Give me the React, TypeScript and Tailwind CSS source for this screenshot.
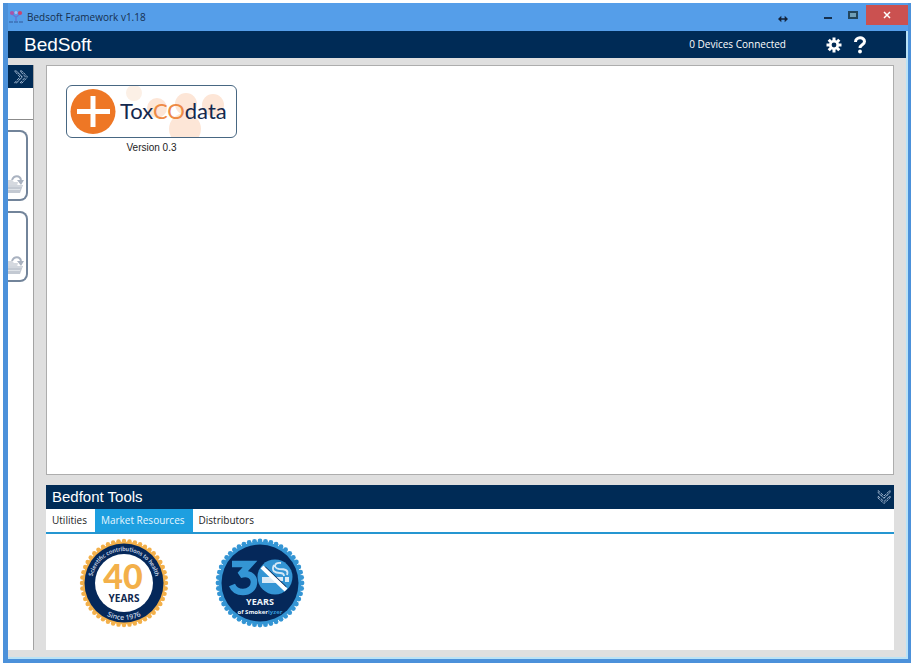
const recentApps = [
  { name: 'First application' },
  { name: 'Second application' },
];

const tabs = [
  { label: 'Utilities', active: false },
  { label: 'Market Resources', active: true },
  { label: 'Distributors', active: false },
];

const scallop = (radius: number, teeth: number) =>
  Array.from({ length: teeth }, (_, i) => {
    const angle = (i / teeth) * Math.PI * 2;
    return { x: 45 + Math.cos(angle) * radius, y: 45 + Math.sin(angle) * radius };
  });

const AppIcon = () => (
  <svg viewBox="0 0 14 14" className="h-[14px] w-[14px]" aria-hidden="true">
    <path d="M3 4l4 3 4-3M7 7v4" stroke="#6377d6" strokeWidth="1.4" fill="none" />
    <circle cx="3" cy="3" r="2.1" fill="#a955a8" />
    <circle cx="7" cy="2.4" r="1.5" fill="#a9bdf2" />
    <circle cx="11" cy="3" r="2.1" fill="#c9436f" />
    <path d="M0 12h4M5 12h4M10 12h4" stroke="#3c70b4" strokeWidth="1.4" />
  </svg>
);

const Chevrons = () => (
  <svg viewBox="0 0 16 16" className="h-4 w-4" fill="none" stroke="#a3b9d2" strokeWidth="1" aria-hidden="true">
    <path d="M1.5 2h2L9 8l-5.500 6h-2L7 8z" strokeDasharray="3 1" />
    <path d="M7 2h2l5.500 6L9 14H7l5.500-6z" strokeDasharray="3 1" />
    <path d="M5 3.500l4.500 4.500L5 12.500" strokeDasharray="1 1" />
  </svg>
);

const Gear = () => (
  <svg viewBox="0 0 16 16" className="h-4 w-4" aria-hidden="true">
    <g stroke="#fff" strokeWidth="3">
      <path d="M8 .5v15M.5 8h15M2.700 2.700l10.600 10.600M13.300 2.700L2.700 13.300" />
    </g>
    <circle cx="8" cy="8" r="5" fill="#fff" />
    <circle cx="8" cy="8" r="2.400" fill="#002b56" />
  </svg>
);

const Basket = () => (
  <svg viewBox="0 0 16 20" className="h-5 w-4" aria-hidden="true">
    <path d="M0 5h4l2 2h4l-1 4H0z" fill="#d5d9df" />
    <path d="M0 10h15l-3 8H0z" fill="#c3c9d2" />
    <path d="M0 11h14M0 14.500h12" stroke="#dfe3e8" strokeWidth="1" />
    <path d="M4 5c2-5 8-5 9 0" stroke="#a9b2c0" strokeWidth="2" fill="none" />
    <path d="M9 5h7l-3 5z" fill="#a9b2c0" />
  </svg>
);

const ToxcoLogo = () => (
  <svg viewBox="0 0 169 51" className="h-full w-full" role="img" aria-label="ToxCOdata">
    <g fill="#fde6d7">
      <circle cx="67" cy="7" r="8" fill="#fcf0e6" />
      <circle cx="90" cy="22" r="10" />
      <circle cx="119" cy="18" r="11" />
      <circle cx="118" cy="43" r="16" />
      <circle cx="146" cy="19" r="11" />
    </g>
    <circle cx="26" cy="25.500" r="22.500" fill="#ee7725" />
    <path d="M26 10v31M10 25.500h33" stroke="#fff" strokeWidth="5" />
    <text x="53" y="33" fontSize="22" fontFamily="Lato, sans-serif" fill="#14294e">
      Tox<tspan fill="#ee8a45">CO</tspan>data
    </text>
  </svg>
);

const FortyYears = () => (
  <svg viewBox="0 0 90 90" className="h-[90px] w-[90px]" role="img" aria-label="40 years, since 1976">
    <defs>
      <path id="forty-top" d="M13 45a32 32 0 0 1 64 0" />
      <path id="forty-bottom" d="M8 45a37 37 0 0 0 74 0" />
    </defs>
    {scallop(42, 48).map((p, i) => <circle key={i} cx={p.x} cy={p.y} r="2.200" fill="#f3b04a" />)}
    <circle cx="45" cy="45" r="41.500" fill="#f3b04a" />
    <circle cx="45" cy="45" r="39.500" fill="#05285a" />
    <circle cx="45" cy="45" r="29" fill="#fff" />
    <g textAnchor="middle">
      <text fontSize="6" fontFamily="Lato, sans-serif" fontWeight="700" fill="#c9d6e6">
        <textPath href="#forty-top" startOffset="50%">Scientific contributions to health</textPath>
      </text>
      <text fontSize="7" fontFamily="Open Sans, sans-serif" fontWeight="600" fill="#c9d6e6">
        <textPath href="#forty-bottom" startOffset="50%">Since 1976</textPath>
      </text>
      <text x="44" y="51" fontSize="34" fontWeight="900" fontFamily="Lato, sans-serif" fill="#f3b04a">40</text>
      <text x="45" y="64" fontSize="10" fontWeight="700" fontFamily="Open Sans, sans-serif" fill="#10294f">YEARS</text>
    </g>
  </svg>
);

const ThirtyYears = () => (
  <svg viewBox="0 0 90 90" className="h-[90px] w-[90px]" role="img" aria-label="30 years of Smokerlyzer">
    {scallop(42, 48).map((p, i) => <circle key={i} cx={p.x} cy={p.y} r="2.400" fill="#3495d4" />)}
    <circle cx="45" cy="45" r="41.500" fill="#3495d4" />
    <circle cx="45" cy="45" r="38.500" fill="#05285a" />
    <path d="M17 26h18L25 37c8-3 14 1 14 7 0 6-5 10-11 10-5 0-9-2-11-7" fill="none" stroke="#3495d4" strokeWidth="6.500" />
    <circle cx="60" cy="39" r="17.500" fill="#3495d4" />
    <path d="M47 39h8l7 6H47zM60 39h8v4h-4z" fill="#dceaf5" />
    <path d="M70 39h4v5h-4z" fill="#dceaf5" />
    <path d="M50 29l21 20" stroke="#05285a" strokeWidth="1.500" />
    <path d="M47 29l24 23" stroke="#fff" strokeWidth="4" />
    <path d="M66 25c-7-1-8 5-2 6 6 0 10 1 8 6M59 27c-3 6 1 8 6 8 3 0 4 1 4 3" stroke="#d5e8f6" strokeWidth="1.800" fill="none" />
    <g fontFamily="Open Sans, sans-serif" fontWeight="700" textAnchor="middle" fill="#eef5fb">
      <text x="45" y="67" fontSize="9">YEARS</text>
      <text x="45" y="76" fontSize="6">of Smoker<tspan fill="#3495d4">lyzer</tspan></text>
    </g>
  </svg>
);

const TitleBar = () => (
  <div className="flex h-7 shrink-0 items-start bg-[#559ee9] text-[#15304f]">
    <div className="flex h-7 flex-1 items-center gap-1 pl-[1px]">
      <AppIcon />
      <span className="font-['Open_Sans',sans-serif] text-[10px]">Bedsoft Framework v1.18</span>
    </div>
    <svg viewBox="0 0 12 8" className="mt-3 mr-9 h-2 w-[10px]" aria-hidden="true">
      <path d="M0 4l4-4v3h4V0l4 4-4 4V5H4v3z" fill="#13233a" />
    </svg>
    <button aria-label="Minimize" className="mt-2 mr-4 flex h-2 w-2 items-end">
      <span className="h-[2px] w-2 bg-[#15304f]" />
    </button>
    <button aria-label="Maximize" className="mt-2 mr-2 h-2 w-[10px] border-2 border-[#23465d] bg-[#6f9fb8]" />
    <button aria-label="Close" className="mt-[2px] flex h-5 w-[42px] items-center justify-center bg-[#cb5150]">
      <svg viewBox="0 0 8 8" className="h-2 w-2" aria-hidden="true">
        <path d="M1 1l6 6M7 1L1 7" stroke="#fff" strokeWidth="1.500" />
      </svg>
    </button>
  </div>
);

const Header = () => (
  <header className="flex h-[27px] shrink-0 items-center bg-[#002b56] pr-10 pl-4 text-white">
    <h1 className="flex-1 text-[19px] leading-6">BedSoft</h1>
    <span className="mr-10 font-['Open_Sans',sans-serif] text-[10px]">0 Devices Connected</span>
    <button aria-label="Settings" className="mr-3"><Gear /></button>
    <button aria-label="Help">
      <svg viewBox="0 0 12 18" className="h-[18px] w-3" aria-hidden="true">
        <path d="M1.500 6C1.500 .5 10.500 .5 10.500 5.500c0 3.500-4.500 3-4.500 6.500" fill="none" stroke="#fff" strokeWidth="3" />
        <circle cx="6" cy="15.500" r="1.900" fill="#fff" />
      </svg>
    </button>
  </header>
);

const Sidebar = () => (
  <aside className="w-[26px] shrink-0 overflow-hidden border-r border-[#a3a3a3] bg-white">
    <button aria-label="Expand" className="flex h-[23px] w-full items-center justify-center bg-[#002b56]">
      <Chevrons />
    </button>
    <div className="h-8 border-b border-[#8b8b8b]" />
    <div className="mt-[10px] flex flex-col gap-[10px]">
      {recentApps.map((app) => (
        <button
          key={app.name}
          aria-label={app.name}
          className="flex h-[71px] w-5 items-end rounded-r-lg border-2 border-l-0 border-[#72849a] pb-1"
        >
          <Basket />
        </button>
      ))}
    </div>
  </aside>
);

const Tools = () => (
  <section className="bg-white">
    <div className="flex h-6 items-center justify-between bg-[#002b56] pr-[2px] pl-[6px] text-white">
      <h2 className="text-[15px] leading-5">Bedfont Tools</h2>
      <button aria-label="Collapse" className="rotate-90"><Chevrons /></button>
    </div>
    <div role="tablist" className="flex h-[25px] border-b-2 border-[#2596d1] font-['Open_Sans',sans-serif] text-[10px]">
      {tabs.map((tab) => (
        <button
          key={tab.label}
          role="tab"
          aria-selected={tab.active}
          className={tab.active ? 'bg-[#1d9fe0] pr-2 pl-[6px] text-[#e6f6ff]' : 'pr-2 pl-[6px] text-[#222]'}
        >
          {tab.label}
        </button>
      ))}
    </div>
    <div className="flex gap-[46px] px-[33px] pt-1 pb-[22px]">
      <button><FortyYears /></button>
      <button><ThirtyYears /></button>
    </div>
  </section>
);

const App = () => {
  return (
    <div className="h-screen bg-white pt-[3px] pr-[5px] pb-[6px] pl-[3px] font-['Liberation_Sans',Arial,sans-serif]">
      <div className="flex h-full flex-col border-r-[3px] border-b-4 border-l-[5px] border-[#4c91da] bg-[#dfdfdf]">
        <TitleBar />
        <div className="flex min-h-0 flex-1 flex-col border-r-2 border-b-2 border-[#b9e2f7]">
          <Header />
          <div className="flex min-h-0 flex-1 gap-3 pt-[7px] pr-3 pb-[7px]">
            <Sidebar />
            <main className="flex min-w-0 flex-1 flex-col gap-[10px]">
              <div className="flex-1 border border-[#adadad] bg-white px-[19px] pt-[19px]">
                <button className="flex w-[171px] flex-col items-center gap-1">
                  <span className="block h-[53px] w-full overflow-hidden rounded-[6px] border border-[#486782]">
                    <ToxcoLogo />
                  </span>
                  <span className="text-[10px] leading-3 text-[#222]">Version 0.3</span>
                </button>
              </div>
              <Tools />
            </main>
          </div>
        </div>
      </div>
    </div>
  );
};

export default App;
